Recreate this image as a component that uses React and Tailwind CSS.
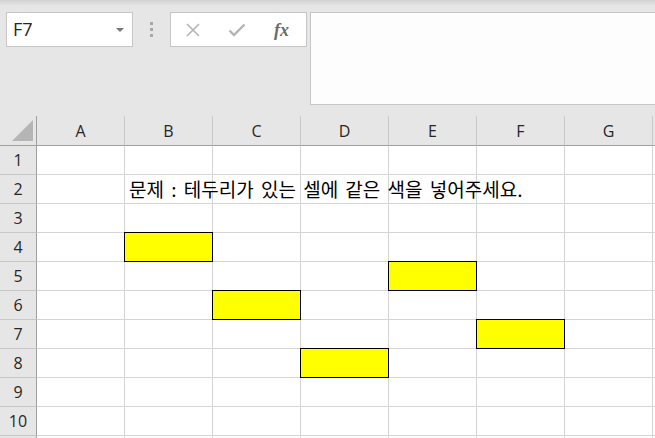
import React from 'react';

const cols = ['A', 'B', 'C', 'D', 'E', 'F', 'G', ''];
const rows = [1, 2, 3, 4, 5, 6, 7, 8, 9, 10, 11];

// yellow cells: row -> column index (0 = A)
const filled = { 4: 1, 5: 4, 6: 2, 7: 5, 8: 3 };

const Toolbar = () => (
  <div className="flex items-start pl-[6px] pt-[12px] h-[104px]">
    <div className="relative w-[127px] h-[35px] bg-white border border-[#c6c6c6] flex items-center pl-[6px]">
      <span className="text-[18px] text-[#262626]" style={{ fontFamily: '"Open Sans", sans-serif' }}>F7</span>
      <div className="absolute right-[8px] top-[15px] w-0 h-0 border-l-[4px] border-r-[4px] border-t-[4px] border-l-transparent border-r-transparent border-t-[#777777]" />
    </div>
    <div className="w-[37px] h-[35px] flex flex-col items-center justify-center gap-[3px]">
      <div className="w-[3px] h-[3px] bg-[#a8a8a8]" />
      <div className="w-[3px] h-[3px] bg-[#a8a8a8]" />
      <div className="w-[3px] h-[3px] bg-[#a8a8a8]" />
    </div>
    <div className="w-[137px] h-[35px] bg-white border border-[#c6c6c6] flex items-center">
      <svg width="16" height="16" viewBox="0 0 16 16" className="ml-[14px]">
        <path d="M2 2L14 14M14 2L2 14" stroke="#b4b4b4" strokeWidth="1.6" fill="none" />
      </svg>
      <svg width="18" height="16" viewBox="0 0 18 16" className="ml-[27px]">
        <path d="M1.5 8.5L6 13L16.5 2.5" stroke="#b4b4b4" strokeWidth="2.4" fill="none" />
      </svg>
      <span className="ml-[28px] text-[18px] italic font-bold text-[#6b6b6b] leading-none" style={{ fontFamily: '"Liberation Serif", serif' }}>fx</span>
    </div>
    <div className="ml-[3px] flex-1 h-[93px] bg-[#fdfdfd] border border-r-0 border-[#c6c6c6]" />
  </div>
);

const Sheet = () => (
  <div className="mt-[12px] grid grid-cols-[37px_repeat(7,88px)_88px] text-[#262626]" style={{ fontFamily: '"Open Sans", sans-serif' }}>
    <div className="relative h-[30px] bg-[#e6e6e6] border-r border-b border-[#9f9f9f]">
      <svg width="22" height="22" viewBox="0 0 22 22" className="absolute left-[12px] top-[4px]">
        <polygon points="21,0 21,21 0,21" fill="#b5b5b5" />
      </svg>
    </div>
    {cols.map((c, i) => (
      <div key={i} className="h-[30px] bg-[#e6e6e6] border-r border-r-[#c8c8c8] border-b border-b-[#9f9f9f] flex items-center justify-center text-[16px]">
        {c}
      </div>
    ))}
    {rows.map((r) => (
      <React.Fragment key={r}>
        <div className="h-[29px] bg-[#e6e6e6] border-r border-r-[#9f9f9f] border-b border-b-[#c8c8c8] flex items-center justify-center text-[16px]">
          {r}
        </div>
        {cols.map((c, i) => (
          <div key={i} className="relative h-[29px] bg-white border-r border-b border-[#d4d4d4]">
            {filled[r] === i && (
              <div className="absolute -left-px -top-px w-[89px] h-[30px] bg-[#ffff00] border border-black z-10" />
            )}
            {r === 2 && i === 1 && (
              <span
                className="absolute left-[4px] bottom-[1px] whitespace-nowrap text-[19px] leading-[26px] [word-spacing:3px] text-black z-10"
                style={{ fontFamily: '"Noto Sans CJK KR", "Malgun Gothic", sans-serif' }}
              >
                문제 : 테두리가 있는 셀에 같은 색을 넣어주세요.
              </span>
            )}
          </div>
        ))}
      </React.Fragment>
    ))}
  </div>
);

export default function App() {
  return (
    <div className="relative w-[655px] h-[438px] overflow-hidden bg-[#e6e6e6]">
      <div className="absolute top-0 left-0 right-0 h-[6px] bg-gradient-to-b from-[#d2d2d2] to-[#e6e6e6]" />
      <div className="relative">
        <Toolbar />
        <Sheet />
      </div>
    </div>
  );
}
